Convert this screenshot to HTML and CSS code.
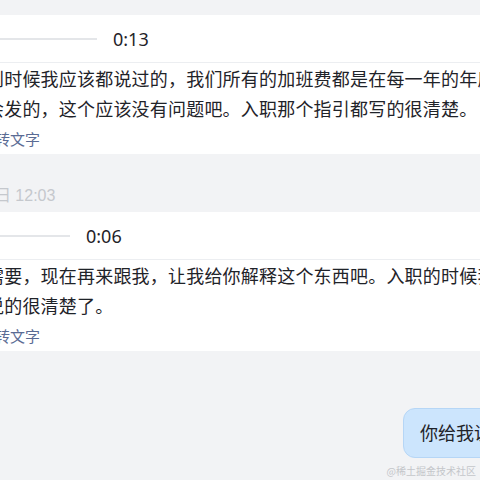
FILE: index.html
```html
<!DOCTYPE html>
<html>
  <head>
    <meta charset="UTF-8">
    <title>语音消息</title>
    <link rel="stylesheet" href="styles.css">
  </head>
  <body>
    <div class="chat">
      <div class="voice-card">
        <div class="voice-row">
          <div class="voice-bar" style="width: 111px"></div>
          <span class="voice-time">0:13</span>
        </div>
        <div class="voice-text">
          <div class="line">到时候我应该都说过的，我们所有的加班费都是在每一年的年底</div>
          <div class="line">会发的，这个应该没有问题吧。入职那个指引都写的很清楚。</div>
          <div class="to-text">转文字</div>
        </div>
      </div>

      <div class="time-tip">6日 12:03</div>

      <div class="voice-card">
        <div class="voice-row">
          <div class="voice-bar" style="width: 84px"></div>
          <span class="voice-time">0:06</span>
        </div>
        <div class="voice-text">
          <div class="line">需要，现在再来跟我，让我给你解释这个东西吧。入职的时候我</div>
          <div class="line">说的很清楚了。</div>
          <div class="to-text">转文字</div>
        </div>
      </div>

      <div class="my-msg">
        <div class="bubble">你给我说一下吧</div>
      </div>
    </div>
    <div class="watermark">@稀土掘金技术社区</div>
  </body>
</html>
```

FILE: styles.css
```css
html, body {
  margin: 0;
  height: 100%;
}
body {
  background-color: #f2f3f5;
  font-family: "Noto Sans", "Noto Sans CJK SC", sans-serif;
  color: #1f2329;
  overflow: hidden;
  position: relative;
}
.chat {
  margin-left: -30px;
  width: 593px;
  padding-top: 15px;
  display: flex;
  flex-direction: column;
}
.voice-card {
  background-color: #fff;
}
.voice-row {
  height: 47px;
  display: flex;
  align-items: center;
  gap: 16px;
  padding-left: 16px;
  border-bottom: 1px solid #eceef1;
}
.voice-bar {
  height: 2px;
  background-color: #e4e6e9;
}
.voice-time {
  font-size: 18px;
  line-height: 24px;
}
.voice-text {
  padding: 1px 0 0 16px;
  font-size: 18px;
  line-height: 30px;
  white-space: nowrap;
}
.line {
  letter-spacing: 0.2px;
}
.to-text {
  padding-left: 9px;
  font-size: 15px;
  color: #5a6b94;
}
.time-tip {
  padding: 31px 0 6px 16px;
  font-family: "Liberation Sans", "Noto Sans CJK SC", sans-serif;
  font-size: 16px;
  line-height: 21px;
  color: #c5c8cd;
}
.my-msg {
  display: flex;
  justify-content: flex-end;
  margin-top: 57px;
}
.bubble {
  background-color: #cce5fd;
  border: 1px solid #b6d6f6;
  border-radius: 12px;
  padding: 12px 16px;
  font-size: 18px;
  line-height: 24px;
  white-space: nowrap;
}
.watermark {
  position: absolute;
  right: 4px;
  bottom: 2px;
  font-size: 10px;
  line-height: 14px;
  color: #c4c6ca;
  font-family: "Noto Sans CJK SC", sans-serif;
}
```
